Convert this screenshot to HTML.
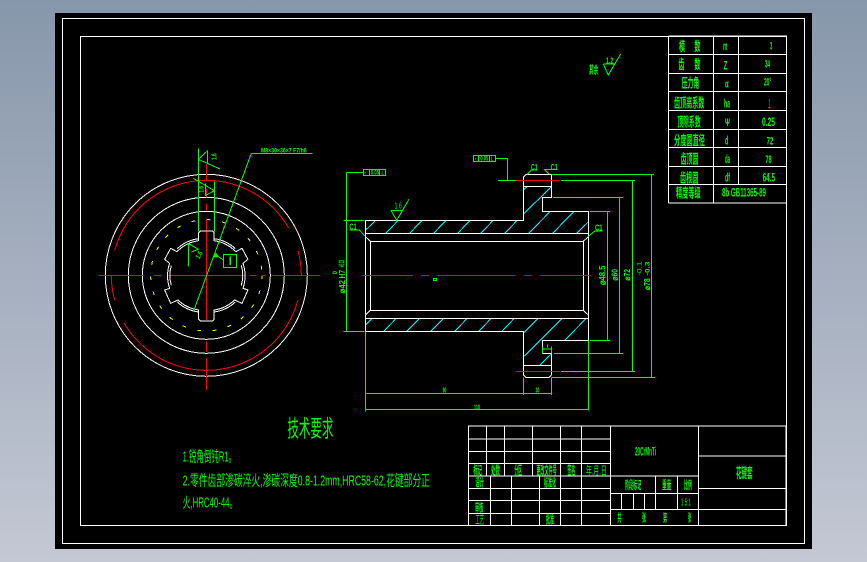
<!DOCTYPE html>
<html><head><meta charset="utf-8"><style>
html,body{margin:0;padding:0;width:867px;height:562px;overflow:hidden;background:linear-gradient(180deg,#8797ab 0%,#c4c8d4 100%)}
svg{position:absolute;left:0;top:0;display:block}
.l{fill:none;vector-effect:non-scaling-stroke;stroke-width:1;shape-rendering:crispEdges}
.w{stroke:#fff}.g{stroke:#0f0}.r{stroke:#f00}.c{stroke:#0ff}.y{stroke:#ff0}
text{fill:#0f0;font-family:"Liberation Sans","Noto Sans CJK SC",sans-serif;font-weight:bold}
.n{font-weight:normal}
</style></head><body>
<svg width="867" height="562" viewBox="0 0 867 562" xmlns="http://www.w3.org/2000/svg">
<rect x="55" y="13" width="757" height="536" fill="#000"/>
<rect class="l w" x="62.5" y="18.5" width="742" height="525"/>
<rect class="l w" x="80.5" y="36.5" width="706" height="489"/>

<!-- left view -->
<g transform="translate(90 140) scale(.3333)">
<circle class="l w" cx="349" cy="406" r="303"/>
<circle class="l w" cx="349" cy="406" r="234"/>
<circle class="l w" cx="349" cy="406" r="192"/>
<circle class="l y" cx="349" cy="406" r="167" pathLength="360" stroke-dasharray="1.3 4"/>
<circle class="l r" cx="349" cy="406" r="285" pathLength="360" stroke-dasharray="45 5 5 5" transform="rotate(15 349 406)"/>
<path class="l r" d="M25 406H163M190 406H213M235 406H463M478 406H500M515 406H525M548 406H690M349 72V120M349 145V172M349 190V213M349 235V540M349 605V635M349 655V750"/>
<path class="l w" d="M326 302V278L331 273H367L372 278V302A110 110 0 0 1 434 332L438 335L456 325L474 358L459 370A116 116 0 0 1 459 445L474 450L456 490L434 480A110 110 0 0 1 372 510V538L367 543H331L326 538V510A110 110 0 0 1 264 480L242 490L224 450L239 445A116 116 0 0 1 239 370L224 358L242 325L260 335L264 332A110 110 0 0 1 326 302Z"/>
<path class="l w" d="M372 296A116 116 0 0 1 436 326M326 296A116 116 0 0 0 262 326M372 516A116 116 0 0 0 436 486M326 516A116 116 0 0 1 262 486M244 376A109 109 0 0 0 244 436M454 376A109 109 0 0 1 454 436"/>
<path class="l g" d="M325 25V274M373 124V274"/>
<path class="l g" d="M325 58L352 33V70M325 58L390 87M310 115L373 152L347 166V130M484 40H668M484 40L312 510M388 352L400 360M295 310V380M295 310L325 328L304 336"/>
<path d="M370 352H388L378 338Z" fill="#0f0"/>
<rect class="l g" x="400" y="343" width="40" height="39"/>
<path class="l g" d="M420 350V375M421 350V375M422 350V375"/>
<text x="513" y="38" font-size="18" textLength="137" lengthAdjust="spacingAndGlyphs">M8×30×36×7 F7/h6</text>
<text transform="translate(380 60) rotate(-90)" font-size="22" textLength="20" lengthAdjust="spacingAndGlyphs">1.6</text>
<text transform="translate(340 158) rotate(-90)" font-size="22" textLength="20" lengthAdjust="spacingAndGlyphs">1.6</text>
<text transform="translate(328 358) rotate(-60)" font-size="22" textLength="22" lengthAdjust="spacingAndGlyphs">1.6</text>
</g>

<!-- main view -->
<g transform="translate(330 145) scale(.3333)">
<path class="l c" d="M107 255L135 228M167 265L205 226M239 265L276 226M311 265L348 226M383 265L420 226M452 265L490 226M524 265L562 226M596 265L661 199M668 265L732 199M740 265L775 231M582 205L637 152M637 152L664 125M580 135L592 124M107 540L125 521M161 559L198 521M230 559L268 521M302 559L340 521M374 559L411 521M446 559L483 521M516 559L552 521M580 564L624 521M580 636L696 521M704 586L768 521M629 661L664 627"/>
<path class="l w" d="M106 226H580V96L588 88H664V158H637V199H775V586H637V625H664V690L658 697H588L580 690V559H106ZM106 265H775M121 289H760M121 496H760M106 520H775M121 289V496M760 289V496M580 124H664M580 661H664M106 275L121 289M760 289L775 275M106 510L121 496M760 496L775 510"/>
<path class="l r" d="M96 391H249M273 391H297M321 391H557M582 391H606M630 391H783M558 106H688M556 679H690"/>
<path class="l g" d="M49 82H100M49 82V559M40 226H103M40 559H103M100 73H167V92H100ZM119 73V92M149 73V92M430 31H496V50H430ZM446 31V50M478 31V50M496 40H532V106M504 106H558M664 88H972M965 88V697M664 697H975M693 106H915M907 106V679M693 679H915M669 157H879M869 157V625M672 625H879M780 199H840M832 199V586M780 586H840M106 559V800M775 586V797M106 793H775M106 745H664M580 697V750M664 697V750M637 612H666M637 605V625M665 605V625M652 598V608M183 196H218M105 273L88 255H58M775 274L795 258H818M592 88L604 75H622M658 88L643 73H683M183 196L200 226L237 163M200 226L218 196"/>
<rect class="l g" x="310" y="400" width="10" height="7"/>
<text x="103" y="89" font-size="15" class="n">r</text><text x="123" y="88" font-size="20" textLength="24" lengthAdjust="spacingAndGlyphs">0.05</text><text x="154" y="89" font-size="17" class="n">L</text>
<text x="434" y="47" font-size="15" class="n">r</text><text x="451" y="46" font-size="20" textLength="24" lengthAdjust="spacingAndGlyphs">0.05</text><text x="482" y="47" font-size="17" class="n">L</text>
<text x="603" y="75" font-size="25" textLength="20" lengthAdjust="spacingAndGlyphs">C1</text>
<text x="662" y="75" font-size="25" textLength="21" lengthAdjust="spacingAndGlyphs">C1</text>
<text x="58" y="254" font-size="25" textLength="22" lengthAdjust="spacingAndGlyphs">C1</text>
<text x="795" y="257" font-size="25" textLength="23" lengthAdjust="spacingAndGlyphs">C1</text>
<text x="194" y="191" font-size="26" textLength="21" lengthAdjust="spacingAndGlyphs" class="n">1.6</text>
<text x="432" y="793" font-size="22" textLength="18" lengthAdjust="spacingAndGlyphs">110</text>
<text x="338" y="743" font-size="22" textLength="11" lengthAdjust="spacingAndGlyphs">90</text>
<text x="617" y="743" font-size="22" textLength="11" lengthAdjust="spacingAndGlyphs">30</text>
<text transform="translate(45 445) rotate(-90)" font-size="26" textLength="40" lengthAdjust="spacingAndGlyphs">⌀42</text>
<text transform="translate(45 400) rotate(-90)" font-size="26" textLength="25" lengthAdjust="spacingAndGlyphs">H7</text>
<text transform="translate(43 367) rotate(-90)" font-size="24" textLength="22" lengthAdjust="spacingAndGlyphs">+0.03</text>
<text transform="translate(21 388) rotate(-90)" font-size="20" textLength="10" lengthAdjust="spacingAndGlyphs">0</text>
<text transform="translate(826 420) rotate(-90)" font-size="28" textLength="58" lengthAdjust="spacingAndGlyphs">⌀48.5</text>
<text transform="translate(863 407) rotate(-90)" font-size="26" textLength="35" lengthAdjust="spacingAndGlyphs">⌀60</text>
<text transform="translate(900 407) rotate(-90)" font-size="26" textLength="35" lengthAdjust="spacingAndGlyphs">⌀72</text>
<text transform="translate(960 435) rotate(-90)" font-size="26" textLength="35" lengthAdjust="spacingAndGlyphs">⌀78</text>
<text transform="translate(934 392) rotate(-90)" font-size="20" textLength="42" lengthAdjust="spacingAndGlyphs" class="n">-0.1</text>
<text transform="translate(959 392) rotate(-90)" font-size="20" textLength="42" lengthAdjust="spacingAndGlyphs">-0.3</text>
</g>

<!-- gear table -->
<g transform="translate(660 30) scale(.3333)">
<path class="l w" d="M25 18H380V540M25 18V519M25 73H380M25 130H380M25 184H380M25 241H380M25 298H380M25 352H380M25 409H380M25 463H380M25 519H380M160 18V519M235 18V463"/>
<text x="57" y="63" font-size="40" textLength="18" lengthAdjust="spacingAndGlyphs">模</text><text x="103" y="63" font-size="40" textLength="18" lengthAdjust="spacingAndGlyphs">数</text>
<text x="55" y="117" font-size="40" textLength="18" lengthAdjust="spacingAndGlyphs">齿</text><text x="103" y="117" font-size="40" textLength="18" lengthAdjust="spacingAndGlyphs">数</text>
<text x="65" y="173" font-size="40" textLength="53" lengthAdjust="spacingAndGlyphs">压力角</text>
<text x="42" y="233" font-size="40" textLength="91" lengthAdjust="spacingAndGlyphs">齿顶高系数</text>
<text x="52" y="289" font-size="40" textLength="70" lengthAdjust="spacingAndGlyphs">顶隙系数</text>
<text x="42" y="345" font-size="40" textLength="93" lengthAdjust="spacingAndGlyphs">分度圆直径</text>
<text x="62" y="401" font-size="40" textLength="53" lengthAdjust="spacingAndGlyphs">齿顶圆</text>
<text x="60" y="457" font-size="40" textLength="55" lengthAdjust="spacingAndGlyphs">齿根圆</text>
<text x="48" y="502" font-size="40" textLength="74" lengthAdjust="spacingAndGlyphs">精度等级</text>
<text x="189" y="60" font-size="36" textLength="13" lengthAdjust="spacingAndGlyphs">m</text>
<text x="191" y="118" font-size="36" textLength="11" lengthAdjust="spacingAndGlyphs">Z</text>
<text x="195" y="173" font-size="34" textLength="11" lengthAdjust="spacingAndGlyphs">α</text>
<text x="192" y="233" font-size="36" textLength="18" lengthAdjust="spacingAndGlyphs">ha</text>
<text x="195" y="288" font-size="34" textLength="15" lengthAdjust="spacingAndGlyphs">Ψ</text>
<text x="195" y="344" font-size="36" textLength="10" lengthAdjust="spacingAndGlyphs">d</text>
<text x="195" y="399" font-size="36" textLength="15" lengthAdjust="spacingAndGlyphs">da</text>
<text x="195" y="455" font-size="36" textLength="15" lengthAdjust="spacingAndGlyphs">df</text>
<text x="330" y="58" font-size="32" textLength="7" lengthAdjust="spacingAndGlyphs">3</text>
<text x="315" y="113" font-size="32" textLength="15" lengthAdjust="spacingAndGlyphs">34</text>
<text x="312" y="167" font-size="32" textLength="22" lengthAdjust="spacingAndGlyphs">20°</text>
<text x="325" y="234" font-size="38" textLength="6" lengthAdjust="spacingAndGlyphs" class="n">1</text>
<text x="306" y="288" font-size="36" textLength="39" lengthAdjust="spacingAndGlyphs">0.25</text>
<text x="320" y="343" font-size="34" textLength="20" lengthAdjust="spacingAndGlyphs">72</text>
<text x="316" y="399" font-size="34" textLength="19" lengthAdjust="spacingAndGlyphs">78</text>
<text x="308" y="454" font-size="36" textLength="37" lengthAdjust="spacingAndGlyphs">64.5</text>
<text x="186" y="500" font-size="36" textLength="132" lengthAdjust="spacingAndGlyphs">8b GB11365-89</text>
</g>

<!-- title block -->
<g transform="translate(460 420) scale(.3333)">
<path class="l w" d="M25 18H978V316H25ZM25 57H451M25 94H451M25 130H451M25 168H715M25 205H451M25 241H451M25 280H451M79 18V168M133 18V168M217 18V168M301 18V316M364 18V316M91 168V316M154 168V316M238 168V316M451 18V316M715 18V316M451 220H715M451 268H715M586 168V268M652 168V268M484 220V268M520 220V268M553 220V268M715 108H978M715 205H978M715 268H978"/>
<text x="40" y="163" font-size="36" textLength="26" lengthAdjust="spacingAndGlyphs">标记</text>
<text x="93" y="163" font-size="36" textLength="27" lengthAdjust="spacingAndGlyphs">处数</text>
<text x="163" y="163" font-size="36" textLength="23" lengthAdjust="spacingAndGlyphs">分区</text>
<text x="229" y="163" font-size="36" textLength="61" lengthAdjust="spacingAndGlyphs">更改文件号</text>
<text x="322" y="163" font-size="36" textLength="24" lengthAdjust="spacingAndGlyphs">签名</text>
<text x="378" y="163" font-size="34" textLength="62" lengthAdjust="spacingAndGlyphs" class="n">年.月.日</text>
<text x="46" y="200" font-size="34" textLength="25" lengthAdjust="spacingAndGlyphs">设计</text>
<text x="252" y="200" font-size="34" textLength="36" lengthAdjust="spacingAndGlyphs">标准化</text>
<text x="45" y="274" font-size="34" textLength="25" lengthAdjust="spacingAndGlyphs">审核</text>
<text x="46" y="310" font-size="34" textLength="26" lengthAdjust="spacingAndGlyphs" class="n">工艺</text>
<text x="258" y="310" font-size="34" textLength="24" lengthAdjust="spacingAndGlyphs">批准</text>
<text x="525" y="107" font-size="36" textLength="63" lengthAdjust="spacingAndGlyphs">20CrMnTi</text>
<text x="495" y="207" font-size="34" textLength="49" lengthAdjust="spacingAndGlyphs">阶段标记</text>
<text x="606" y="207" font-size="34" textLength="28" lengthAdjust="spacingAndGlyphs">重量</text>
<text x="672" y="207" font-size="34" textLength="24" lengthAdjust="spacingAndGlyphs">比例</text>
<text x="663" y="256" font-size="30" textLength="30" lengthAdjust="spacingAndGlyphs" class="n">1.5:1</text>
<text x="472" y="304" font-size="32" textLength="12" lengthAdjust="spacingAndGlyphs">共</text>
<text x="546" y="304" font-size="32" textLength="12" lengthAdjust="spacingAndGlyphs">张</text>
<text x="609" y="304" font-size="32" textLength="12" lengthAdjust="spacingAndGlyphs">第</text>
<text x="684" y="304" font-size="32" textLength="10" lengthAdjust="spacingAndGlyphs">张</text>
<text x="828" y="174" font-size="42" textLength="50" lengthAdjust="spacingAndGlyphs">花键套</text>
</g>

<!-- technical requirements -->
<g transform="translate(170 410) scale(.3333)">
<text x="352" y="79" font-size="70" textLength="138" lengthAdjust="spacingAndGlyphs" class="n">技术要求</text>
<text x="38" y="155" font-size="44" textLength="160" lengthAdjust="spacingAndGlyphs" class="n">1.锐角倒钝R1。</text>
<text x="38" y="227" font-size="44" textLength="742" lengthAdjust="spacingAndGlyphs" class="n">2.零件齿部渗碳淬火,渗碳深度0.8-1.2mm,HRC58-62,花键部分正</text>
<text x="38" y="292" font-size="44" textLength="164" lengthAdjust="spacingAndGlyphs" class="n">火,HRC40-44。</text>
</g>

<!-- top roughness -->
<g transform="translate(570 40) scale(.3333)">
<path class="l g" d="M100 72H134M100 72L115 105L152 42M115 105L134 72"/>
<text x="57" y="100" font-size="32" textLength="28" lengthAdjust="spacingAndGlyphs">其余</text>
<text x="108" y="70" font-size="26" textLength="22" lengthAdjust="spacingAndGlyphs">1.2</text>
</g>
</svg>
</body></html>
